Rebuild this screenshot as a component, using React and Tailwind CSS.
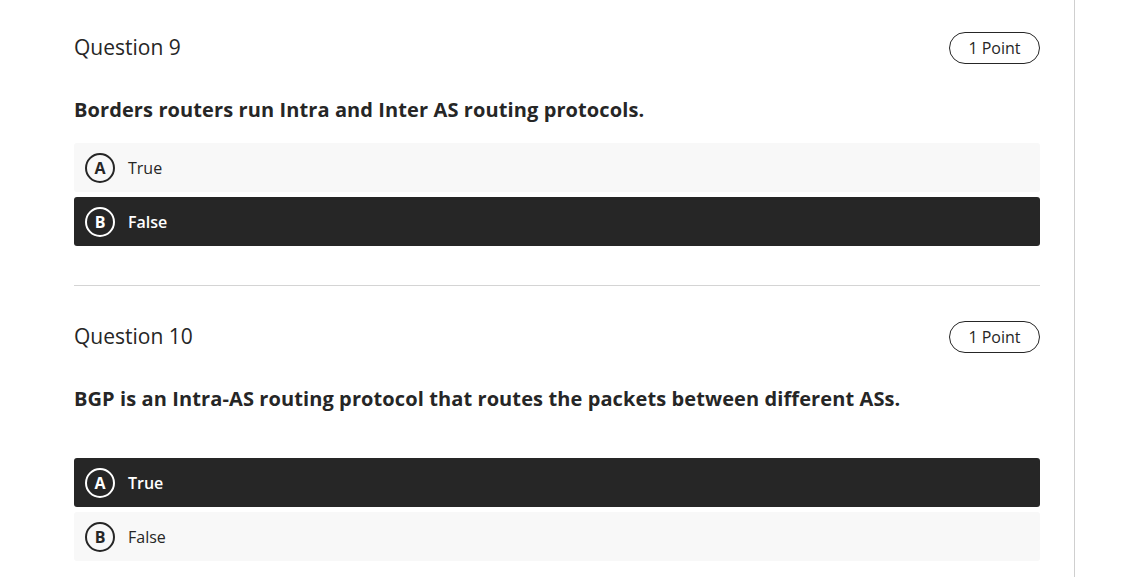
import React from "react";

function Option({ letter, text, selected }) {
  return (
    <div
      className={
        "flex items-center h-[49px] rounded-[3px] pl-[11px] " +
        (selected ? "bg-[#262626] text-white" : "bg-[#f8f8f8] text-[#262626]")
      }
    >
      <div
        className={
          "w-[30px] h-[30px] rounded-full border-2 flex items-center justify-center text-[16px] font-bold leading-none " +
          (selected ? "border-white" : "border-[#262626]")
        }
      >
        {letter}
      </div>
      <span className={"ml-[13px] text-[16px] " + (selected ? "font-semibold" : "font-normal")}>
        {text}
      </span>
    </div>
  );
}

function Header({ title }) {
  return (
    <div className="flex items-center justify-between h-[32px]">
      <div className="text-[21px] text-[#262626]">{title}</div>
      <div className="h-[32px] w-[91px] rounded-full border border-[#262626] flex items-center justify-center text-[16px] text-[#262626]">
        1 Point
      </div>
    </div>
  );
}

export default function App() {
  return (
    <div
      className="w-[1135px] h-[577px] overflow-hidden bg-white flex"
      style={{ fontFamily: '"Open Sans", "Noto Sans", sans-serif' }}
    >
      <div className="w-[1075px] h-full border-r border-[#cfcfcf] pl-[74px] pr-[34px] pt-[32px]">
        <Header title="Question 9" />
        <div className="mt-[32px] text-[20px] leading-[28px] font-bold tracking-[0.1px] text-[#262626]">
          Borders routers run Intra and Inter AS routing protocols.
        </div>
        <div className="mt-[19px] flex flex-col gap-[5px]">
          <Option letter="A" text="True" />
          <Option letter="B" text="False" selected />
        </div>
        <div className="mt-[39px] h-px bg-[#d4d4d4]" />
        <div className="mt-[35px]">
          <Header title="Question 10" />
        </div>
        <div className="mt-[32px] text-[20px] leading-[28px] font-bold tracking-[0.1px] text-[#262626]">
          BGP is an Intra-AS routing protocol that routes the packets between different ASs.
        </div>
        <div className="mt-[45px] flex flex-col gap-[5px]">
          <Option letter="A" text="True" selected />
          <Option letter="B" text="False" />
        </div>
      </div>
    </div>
  );
}
